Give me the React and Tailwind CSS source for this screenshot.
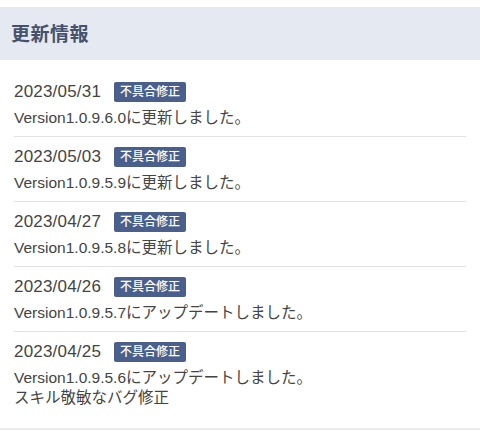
const updates = [
    { date: "2023/05/31", lines: ["Version1.0.9.6.0に更新しました。"] },
    { date: "2023/05/03", lines: ["Version1.0.9.5.9に更新しました。"] },
    { date: "2023/04/27", lines: ["Version1.0.9.5.8に更新しました。"] },
    { date: "2023/04/26", lines: ["Version1.0.9.5.7にアップデートしました。"] },
    {
        date: "2023/04/25",
        lines: ["Version1.0.9.5.6にアップデートしました。", "スキル敬敏なバグ修正"],
    },
];

export default function App() {
    return (
        <div
            className="w-[480px] h-[437px] bg-white pt-[7px] overflow-hidden"
            style={{ fontFamily: '"Liberation Sans", "Noto Sans CJK JP", sans-serif' }}
        >
            {/* Section header */}
            <div className="h-[53px] bg-[#e5e9f2] flex items-center px-[11px]">
                <h2 className="text-[19px] font-bold text-[#46516e] tracking-[0.5px]" style={{ fontFamily: '"Noto Sans CJK JP", sans-serif' }}>
                    更新情報
                </h2>
            </div>

            {/* Update list */}
            <div className="pt-[12px] border-b-2 border-[#ececec]">
                <ul className="px-[14px]">
                    {updates.map((u, i) => (
                        <li
                            key={u.date}
                            className={
                                i === updates.length - 1
                                    ? "pt-[10px] pb-[20px]"
                                    : "pt-[10px] pb-[8px] border-b border-[#e3e3e3]"
                            }
                        >
                            <div className="flex items-center h-[20px] gap-[13px]">
                                <span className="text-[17px] text-[#444] leading-[20px] tracking-[0.2px]">
                                    {u.date}
                                </span>
                                <span className="h-[20px] px-[6px] flex items-center bg-[#4b5f8d] text-white text-[12px] font-medium rounded-[2px] leading-none">
                                    不具合修正
                                </span>
                            </div>
                            <div className="mt-[6px] text-[15.5px] leading-[20px] text-[#444]">
                                {u.lines.map((l) => (
                                    <div key={l}>{l}</div>
                                ))}
                            </div>
                        </li>
                    ))}
                </ul>
            </div>
        </div>
    );
}
